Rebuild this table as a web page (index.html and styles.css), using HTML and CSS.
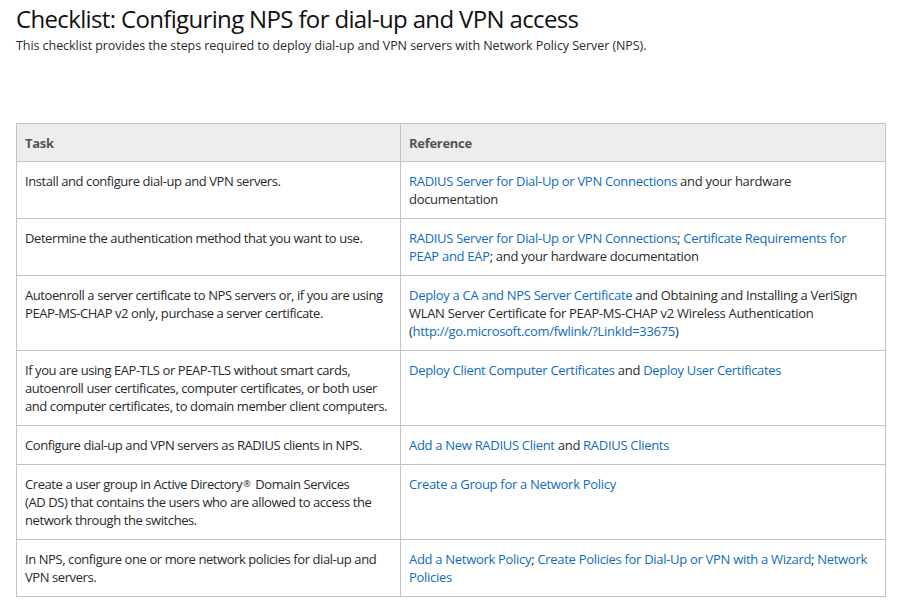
FILE: index.html
```html
<!DOCTYPE html>
<html lang="en">
<head>
<meta charset="utf-8">
<title>Checklist: Configuring NPS for dial-up and VPN access</title>
<link rel="stylesheet" href="styles.css">
</head>
<body>
<main class="page">
  <h1 class="title">Checklist: Configuring NPS for dial-up and VPN access</h1>
  <p class="intro">This checklist provides the steps required to deploy dial-up and VPN servers with Network Policy Server (NPS).</p>
  <table class="checklist">
    <colgroup><col class="c-task"><col class="c-ref"></colgroup>
    <thead>
      <tr><th>Task</th><th>Reference</th></tr>
    </thead>
    <tbody>
      <tr>
        <td>Install and configure dial-up and VPN servers.</td>
        <td><a href="#">RADIUS Server for Dial-Up or VPN Connections</a> and your hardware documentation</td>
      </tr>
      <tr>
        <td>Determine the authentication method that you want to use.</td>
        <td><a href="#">RADIUS Server for Dial-Up or VPN Connections</a>; <a href="#">Certificate Requirements for PEAP and EAP</a>; and your hardware documentation</td>
      </tr>
      <tr>
        <td>Autoenroll a server certificate to NPS servers or, if you are using PEAP-MS-CHAP v2 only, purchase a server certificate.</td>
        <td><a href="#">Deploy a CA and NPS Server Certificate</a> and Obtaining and Installing a VeriSign WLAN Server Certificate for PEAP-MS-CHAP v2 Wireless Authentication (<a href="#">http://go.microsoft.com/fwlink/?LinkId=33675</a>)</td>
      </tr>
      <tr>
        <td>If you are using EAP-TLS or PEAP-TLS without smart cards, autoenroll user certificates, computer certificates, or both user and computer certificates, to domain member client computers.</td>
        <td><a href="#">Deploy Client Computer Certificates</a> and <a href="#">Deploy User Certificates</a></td>
      </tr>
      <tr>
        <td>Configure dial-up and VPN servers as RADIUS clients in NPS.</td>
        <td><a href="#">Add a New RADIUS Client</a> and <a href="#">RADIUS Clients</a></td>
      </tr>
      <tr>
        <td>Create a user group in Active Directory<span class="reg">®</span> Domain Services (AD&nbsp;DS) that contains the users who are allowed to access the network through the switches.</td>
        <td><a href="#">Create a Group for a Network Policy</a></td>
      </tr>
      <tr>
        <td>In NPS, configure one or more network policies for dial-up and VPN servers.</td>
        <td><a href="#">Add a Network Policy</a>; <a href="#">Create Policies for Dial-Up or VPN with a Wizard</a>; <a href="#">Network Policies</a></td>
      </tr>
    </tbody>
  </table>
</main>
</body>
</html>
```

FILE: styles.css
```css
html, body {
  margin: 0;
  padding: 0;
  background: #ffffff;
}

body {
  font-family: "Open Sans", "Noto Sans", "Liberation Sans", sans-serif;
  color: #2a2a2a;
}

.page {
  padding: 4px 16px 0 16px;
}

.title {
  margin: 0;
  font-size: 24px;
  line-height: 30px;
  font-weight: 400;
  color: #111111;
  letter-spacing: -0.65px;
}

.intro {
  margin: 3px 0 0 0;
  font-size: 12.5px;
  line-height: 18px;
  color: #2a2a2a;
  letter-spacing: -0.06px;
}

.checklist {
  margin-top: 68px;
  width: 870px;
  table-layout: fixed;
  border-collapse: collapse;
  font-size: 13px;
  line-height: 18px;
  letter-spacing: -0.3px;
}

.c-task { width: 384px; }

.checklist th,
.checklist td {
  border: 1px solid #c4c4c4;
  padding: 10px 8px;
  text-align: left;
  vertical-align: top;
}

.checklist td:first-child {
  letter-spacing: -0.42px;
}

.checklist th {
  background: #ededed;
  color: #555555;
  font-weight: 700;
  padding: 10px 8px 9px 8px;
}

.checklist a {
  color: #0f6cbd;
  text-decoration: none;
}

.reg {
  font-size: 9px;
  line-height: 0;
  vertical-align: 2px;
  margin: 0 2px 0 1px;
}
```
